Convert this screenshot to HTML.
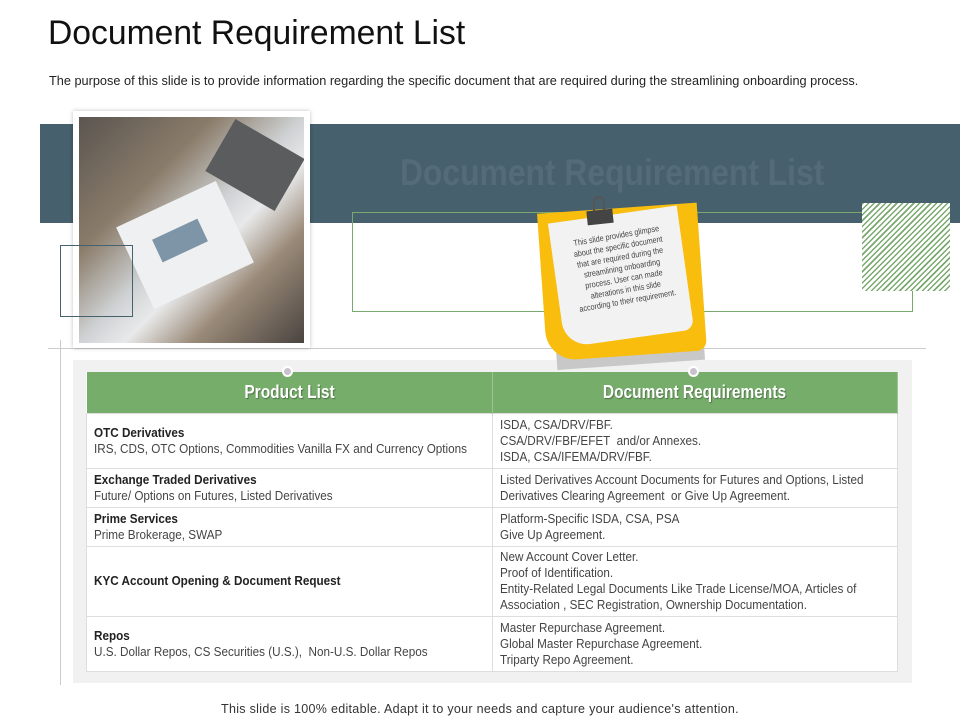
<!DOCTYPE html>
<html><head><meta charset="utf-8"><style>
*{margin:0;padding:0;box-sizing:border-box}
body{width:960px;height:720px;overflow:hidden;background:#fff;font-family:"Liberation Sans",sans-serif;position:relative;color:#333}
.a{position:absolute}
h1{position:absolute;left:48px;top:14px;font-weight:normal;font-size:34px;color:#111;transform:scaleX(.99);transform-origin:left;white-space:nowrap}
.sub{left:49px;top:74px;font-size:12.7px;color:#222;white-space:nowrap;transform:scaleX(1.003);transform-origin:left}
table{position:absolute;left:86px;top:372px;width:812px;border-collapse:collapse;background:#fff;table-layout:fixed}
th{background:#76ad6a;color:#fff;font-size:18px;height:41px;text-shadow:1px 1px 1px rgba(0,0,0,.35);border-right:1px solid #9cc493;overflow:hidden}
th span{display:inline-block;transform:scaleX(.86)}
td{font-size:13px;color:#444;border:1px solid #ddd;padding:0 7px;line-height:16px;vertical-align:middle;overflow:hidden}
td b{color:#222}
.n{transform:scaleX(.9);transform-origin:left;white-space:nowrap}
</style></head><body>
<h1>Document Requirement List</h1>
<div class="a sub">The purpose of this slide is to provide information regarding the specific document that are required during the streamlining onboarding process.</div>
<div class="a" style="left:40px;top:124px;width:920px;height:99px;background:#46606d"></div>
<div class="a" style="left:400px;top:152px;font-size:37px;font-weight:bold;color:#536c78;white-space:nowrap;transform:scaleX(.86);transform-origin:left">Document Requirement List</div>
<div class="a" style="left:352px;top:212px;width:561px;height:100px;border:1px solid #7aa96e"></div>
<div class="a" style="left:862px;top:203px;width:88px;height:88px;background:repeating-linear-gradient(135deg,#7aa96e 0 1.5px,#fff 1.5px 4px)"></div>
<div class="a" style="left:48px;top:348px;width:878px;height:1px;background:#ccc"></div>
<div class="a" style="left:60px;top:340px;width:1px;height:345px;background:#ccc"></div>
<div class="a" style="left:73px;top:111px;width:237px;height:237px;background:#fff;box-shadow:0 0 4px rgba(0,0,0,.25)"></div>
<div class="a" style="left:79px;top:117px;width:225px;height:226px;overflow:hidden;background:linear-gradient(135deg,#5a5550 0%,#8a7c6a 30%,#cfd2d4 50%,#e8e9ea 60%,#9a8a78 75%,#4a4440 100%)">
<div class="a" style="left:136px;top:18px;width:80px;height:60px;background:#5a5c5e;transform:rotate(30deg)"></div>
<div class="a" style="left:51px;top:83px;width:110px;height:90px;background:#eef0f2;transform:rotate(-25deg)"></div>
<div class="a" style="left:76px;top:111px;width:50px;height:25px;background:#7e95a8;transform:rotate(-25deg)"></div>
</div>
<div class="a" style="left:60px;top:245px;width:73px;height:72px;border:1px solid #46606d"></div>
<div class="a" style="left:73px;top:360px;width:839px;height:323px;background:#f1f1f1"></div>
<div class="a" style="left:552px;top:215px;width:148px;height:150px;background:#c8c8c8;transform:rotate(-4deg)"></div>
<div class="a" style="left:542px;top:208px;width:160px;height:148px;background:#f8bd0d;transform:rotate(-4deg);border-radius:0 0 10px 30px"></div>
<div class="a" style="left:556px;top:214px;width:130px;height:125px;background:#f2f2f2;transform:rotate(-8deg);border-radius:0 0 10px 25px"></div>
<div class="a" style="left:593px;top:196px;width:12px;height:26px;border:2px solid #555;border-radius:6px 6px 0 0;border-bottom:0"></div>
<div class="a" style="left:587px;top:210px;width:26px;height:14px;background:#444;transform:rotate(-6deg)"></div>
<div class="a" style="left:562px;top:230px;width:120px;font-size:8.5px;line-height:11px;text-align:center;color:#444;transform:rotate(-10deg) scaleX(.85)">This slide provides glimpse about the specific document that are required during the streamlining onboarding process. User can made alterations in this slide according to their requirement.</div>
<table>
<tr><th style="width:406px"><span>Product List</span></th><th><span>Document Requirements</span></th></tr>
<tr style="height:55px"><td><div class="n"><b>OTC Derivatives</b><br>IRS, CDS, OTC Options, Commodities Vanilla FX and Currency Options</div></td><td><div class="n">ISDA, CSA/DRV/FBF.<br>CSA/DRV/FBF/EFET &nbsp;and/or Annexes.<br>ISDA, CSA/IFEMA/DRV/FBF.</div></td></tr>
<tr style="height:39px"><td><div class="n"><b>Exchange Traded Derivatives</b><br>Future/ Options on Futures, Listed Derivatives</div></td><td><div class="n">Listed Derivatives Account Documents for Futures and Options, Listed<br>Derivatives Clearing Agreement &nbsp;or Give Up Agreement.</div></td></tr>
<tr style="height:39px"><td><div class="n"><b>Prime Services</b><br>Prime Brokerage, SWAP</div></td><td><div class="n">Platform-Specific ISDA, CSA, PSA<br>Give Up Agreement.</div></td></tr>
<tr style="height:70px"><td><div class="n"><b>KYC Account Opening &amp; Document Request</b></div></td><td><div class="n">New Account Cover Letter.<br>Proof of Identification.<br>Entity-Related Legal Documents Like Trade License/MOA, Articles of<br>Association , SEC Registration, Ownership Documentation.</div></td></tr>
<tr style="height:55px"><td><div class="n"><b>Repos</b><br>U.S. Dollar Repos, CS Securities (U.S.), &nbsp;Non-U.S. Dollar Repos</div></td><td><div class="n">Master Repurchase Agreement.<br>Global Master Repurchase Agreement.<br>Triparty Repo Agreement.</div></td></tr>
</table>
<div class="a" style="left:282px;top:366px;width:11px;height:11px;border-radius:50%;background:#c8c2cc;border:2px solid #fff"></div>
<div class="a" style="left:688px;top:366px;width:11px;height:11px;border-radius:50%;background:#c8c2cc;border:2px solid #fff"></div>
<div class="a" style="left:0;top:702px;width:960px;text-align:center;font-size:12.5px;letter-spacing:.3px;color:#333">This slide is 100% editable. Adapt it to your needs and capture your audience's attention.</div>
</body></html>
